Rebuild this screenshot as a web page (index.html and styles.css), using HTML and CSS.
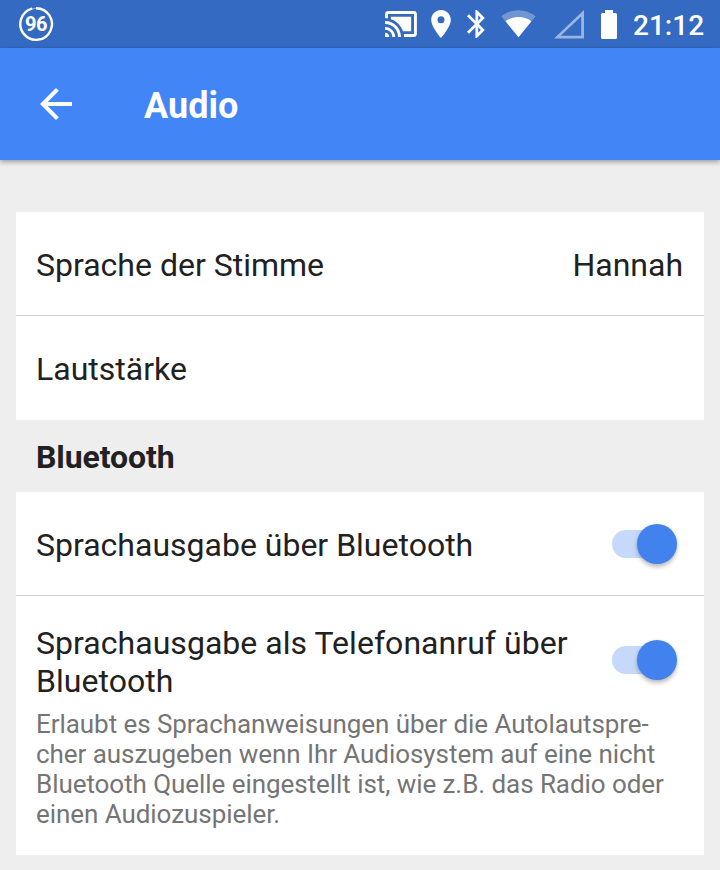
FILE: index.html
```
<!DOCTYPE html>
<html lang="de">
<head>
    <meta charset="utf-8">
    <title>Audio</title>
    <link rel="stylesheet" href="styles.css">
</head>
<body>
    <div class="statusbar">
        <svg class="badge" width="36" height="36" viewBox="0 0 36 36">
            <circle cx="18" cy="18" r="15.8" fill="none" stroke="#fff" stroke-opacity="0.5" stroke-width="1"/>
            <path d="M18 2.2A15.8 15.8 0 1 1 14.2 2.7" fill="none" stroke="#fff" stroke-width="2.4"/>
            <text x="18" y="25" text-anchor="middle">96</text>
        </svg>
        <div class="status-icons">
            <svg class="cast" width="32" height="26" viewBox="1 3 22 18">
                <path d="M21 3H3c-1.1 0-2 .9-2 2v3h2V5h18v14h-7v2h7c1.1 0 2-.9 2-2V5c0-1.1-.9-2-2-2zM1 18v3h3c0-1.66-1.34-3-3-3zm0-4v2c2.76 0 5 2.24 5 5h2c0-3.87-3.13-7-7-7zm0-4v2c4.97 0 9 4.03 9 9h2c0-6.08-4.93-11-11-11zM19 7H5v1.63c3.96 1.28 7.09 4.41 8.37 8.37H19V7z"/>
            </svg>
            <svg class="place" width="20" height="28" viewBox="5 2 14 20">
                <path d="M12 2C8.13 2 5 5.13 5 9c0 5.25 7 13 7 13s7-7.75 7-13c0-3.87-3.13-7-7-7zm0 9.5a2.5 2.5 0 0 1 0-5 2.5 2.5 0 0 1 0 5z"/>
            </svg>
            <svg class="bt" width="18" height="28" viewBox="5 2 12.8 20">
                <path d="M17.71 7.71L12 2h-1v7.59L6.41 5 5 6.41 10.59 12 5 17.59 6.41 19 11 14.41V22h1l5.71-5.71-4.3-4.29 4.3-4.29zM13 5.83l1.88 1.88L13 9.59V5.83zm1.88 10.46L13 18.17v-3.76l1.88 1.88z"/>
            </svg>
            <svg class="wifi" width="35" height="28" viewBox="0 0 35 28">
                <path d="M0.3 6.3C10 -1.7 25 -1.7 34.7 6.3L17.5 27.3z" opacity="0.3"/>
                <path d="M4.6 11.3C12 5.7 23 5.7 30.4 11.3L17.5 27.3z"/>
            </svg>
            <svg class="signal" width="30" height="29" viewBox="0 0 30 29">
                <path d="M0 28.500L30 0V28.500zM6.600 25.700H27.200V6.500z" fill-rule="evenodd" opacity="0.5"/>
            </svg>
            <svg class="battery" width="16" height="29" viewBox="0 0 16 29">
                <path d="M4 0h8v3h2.5A1.5 1.5 0 0 1 16 4.500V27.500A1.500 1.500 0 0 1 14.500 29h-13A1.500 1.500 0 0 1 0 27.500V4.500A1.500 1.500 0 0 1 1.500 3H4z"/>
            </svg>
            <span class="clock">21:12</span>
        </div>
    </div>
    <div class="toolbar">
        <svg class="back" width="32" height="32" viewBox="4 4 16 16">
            <path d="M20 11H7.830l5.590-5.590L12 4l-8 8 8 8 1.410-1.410L7.830 13H20v-2z"/>
        </svg>
        <h1>Audio</h1>
    </div>
    <div class="content">
        <div class="card">
            <div class="row">
                <span>Sprache der Stimme</span>
                <span class="value">Hannah</span>
            </div>
            <div class="row">
                <span>Lautstärke</span>
            </div>
        </div>
        <h2>Bluetooth</h2>
        <div class="card">
            <div class="row">
                <span>Sprachausgabe über Bluetooth</span>
                <div class="switch"><div class="thumb"></div></div>
            </div>
            <div class="row-tall">
                <div class="row-head">
                    <span class="long">Sprachausgabe als Telefonanruf über<br>Bluetooth</span>
                    <div class="switch"><div class="thumb"></div></div>
                </div>
                <p>Erlaubt es Sprachanweisungen über die Autolautspre-<br>cher auszugeben wenn Ihr Audiosystem auf eine nicht<br>Bluetooth Quelle eingestellt ist, wie z.B. das Radio oder<br>einen Audiozuspieler.</p>
            </div>
        </div>
    </div>
</body>
</html>
```
FILE: styles.css
```
* {
    box-sizing: border-box;
}
body {
    margin: 0;
    height: 870px;
    overflow: hidden;
    background-color: #eeeeee;
    color: #212121;
    font-family: Roboto, sans-serif;
    font-size: 32px;
    line-height: 38px;
}
svg {
    display: block;
    flex: none;
    fill: #ffffff;
}
.statusbar {
    display: flex;
    justify-content: space-between;
    align-items: center;
    height: 48px;
    padding: 0 16px 0 18px;
    background-color: #346ac1;
    color: #ffffff;
}
.badge text {
    font-size: 20px;
    font-weight: 700;
    letter-spacing: -0.5px;
}
.status-icons {
    display: flex;
    align-items: center;
}
.cast { margin-right: 14px; }
.place { margin-right: 16px; }
.bt { margin-right: 16px; }
.wifi { margin-right: 18px; }
.signal { margin-right: 17px; }
.battery { margin-right: 16px; }
.clock {
    width: 71px;
    padding-top: 3px;
    font-size: 28px;
    font-weight: 500;
    white-space: nowrap;
}
.toolbar {
    display: flex;
    align-items: center;
    height: 112px;
    padding-left: 40px;
    background-color: #4285f6;
    color: #ffffff;
    box-shadow: 0 2px 5px rgba(0, 0, 0, 0.35);
}
h1 {
    margin: 4px 0 0 72px;
    font-size: 36px;
    font-weight: 700;
}
.content {
    padding: 52px 16px 0;
}
.card {
    background-color: #ffffff;
}
.row {
    display: flex;
    justify-content: space-between;
    align-items: center;
    height: 104px;
    padding: 2px 20px 0;
    border-bottom: 1px solid #d2d2d2;
}
.row:last-child {
    border-bottom: none;
}
.value {
    margin-right: 1px;
}
.long {
    letter-spacing: 0.04px;
}
h2 {
    margin: 0;
    padding: 18px 20px 16px;
    font-size: 32px;
    font-weight: 700;
    letter-spacing: -0.1px;
}
.row-tall {
    padding: 28px 20px 26px;
}
.row-head {
    display: flex;
    justify-content: space-between;
}
.switch {
    flex: none;
    display: flex;
    align-items: center;
    justify-content: flex-end;
    width: 65px;
    height: 28px;
    margin: 0 7px 0 0;
    border-radius: 14px;
    background: linear-gradient(#c6d9fb, #c6d9fb) no-repeat 0 0 / 50px 28px;
}
.row .switch {
    margin-top: -2px;
}
.row-head .switch {
    margin-top: 22px;
}
.thumb {
    flex: none;
    width: 40px;
    height: 40px;
    border-radius: 50%;
    background-color: #4282ee;
    box-shadow: 0 3px 4px rgba(0, 0, 0, 0.25), 0 0 3px rgba(0, 0, 0, 0.08);
}
p {
    margin: 9px 0 0;
    color: #757575;
    font-size: 26px;
    line-height: 30px;
    letter-spacing: -0.06px;
    white-space: nowrap;
}
```
